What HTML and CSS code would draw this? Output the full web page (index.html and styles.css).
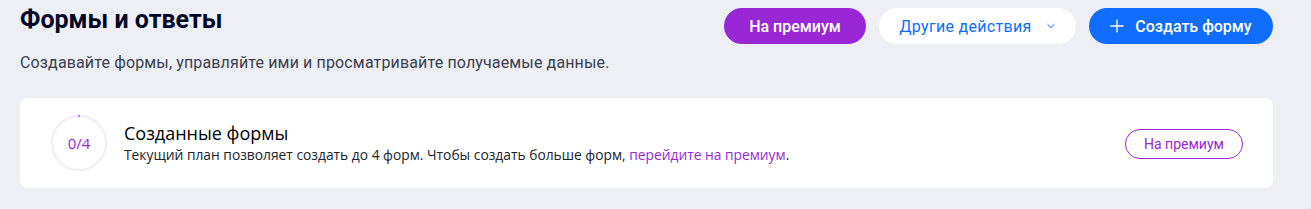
FILE: index.html
```html
<!DOCTYPE html>
<html lang="ru">
<head>
<meta charset="utf-8">
<link rel="stylesheet" href="styles.css">
</head>
<body>
<div class="page">
  <div class="header">
    <div class="heading">
      <h1 class="title">Формы и ответы</h1>
      <p class="subtitle">Создавайте формы, управляйте ими и просматривайте получаемые данные.</p>
    </div>
    <div class="actions">
      <button class="btn btn-premium">На премиум</button>
      <button class="btn btn-more">Другие действия
        <svg class="chev" width="10" height="6" viewBox="0 0 10 6"><path d="M1.5 1.2 L5 4.6 L8.5 1.2" fill="none" stroke="#116dff" stroke-width="1"/></svg>
      </button>
      <button class="btn btn-create">
        <svg class="plus" width="14" height="14" viewBox="0 0 14 14"><path d="M7 0.5 V13.5 M0.5 7 H13.5" stroke="#fff" stroke-width="1.3"/></svg>
        Создать форму
      </button>
    </div>
  </div>
  <div class="card">
    <div class="ring">
      <svg width="58" height="58" viewBox="0 0 58 58">
        <circle cx="29" cy="29" r="27" fill="none" stroke="#f3ebf9" stroke-width="2"/>
        <path d="M28.4 2 H29.6" stroke="#9a27d5" stroke-width="2"/>
      </svg>
      <span class="ring-text">0/4</span>
    </div>
    <div class="info">
      <div class="info-title">Созданные формы</div>
      <div class="info-text">Текущий план позволяет создать до 4 форм. Чтобы создать больше форм, <a class="link" href="#">перейдите на премиум</a>.</div>
    </div>
    <button class="btn-outline">На премиум</button>
  </div>
</div>
</body>
</html>
```
FILE: styles.css
```css
html, body {
  margin: 0;
  padding: 0;
  background: #edeff4;
}
body {
  font-family: "Roboto", sans-serif;
  color: #000624;
}
.page {
  padding: 0 38px 0 20px;
}
.header {
  display: flex;
  justify-content: space-between;
  align-items: flex-start;
}
.title {
  margin: 0;
  padding-top: 4px;
  font-family: "Roboto", sans-serif;
  font-size: 25px;
  font-weight: 700;
  line-height: 32px;
  color: #000624;
}
.subtitle {
  margin: 15px 0 0;
  font-size: 16px;
  line-height: 24px;
  letter-spacing: 0.14px;
  color: #3b3f4f;
  font-family: "Roboto", sans-serif;
}
.actions {
  display: flex;
  gap: 13px;
  padding-top: 8px;
}
.btn {
  height: 36px;
  border: none;
  border-radius: 18px;
  font-family: "Roboto", sans-serif;
  font-size: 16px;
  font-weight: 500;
  display: flex;
  align-items: center;
  cursor: pointer;
}
.btn-premium {
  background: #9a27d5;
  color: #fff;
  padding: 0 24px;
  width: 142px;
  justify-content: center;
}
.btn-more {
  background: #fff;
  color: #116dff;
  font-weight: 400;
  width: 197px;
  justify-content: center;
  gap: 14px;
  letter-spacing: 0.3px;
}
.btn-create {
  background: #116dff;
  color: #fff;
  width: 184px;
  justify-content: center;
  gap: 11px;
}
.card {
  margin-top: 23px;
  background: #fff;
  border-radius: 8px;
  height: 90px;
  display: flex;
  align-items: center;
  padding: 0 30px 0 30px;
  box-sizing: border-box;
}
.ring {
  position: relative;
  width: 58px;
  height: 58px;
  flex: none;
}
.ring svg {
  display: block;
}
.ring-text {
  position: absolute;
  inset: 0;
  display: flex;
  align-items: center;
  justify-content: center;
  font-family: "Open Sans", sans-serif;
  font-size: 15px;
  color: #9a27d5;
}
.info {
  margin-left: 16px;
  flex: 1;
  padding-bottom: 2px;
}
.info-title {
  font-family: "Open Sans", sans-serif;
  font-size: 18px;
  line-height: 24px;
  color: #000;
}
.info-text {
  margin-top: 1px;
  font-family: "Open Sans", sans-serif;
  font-size: 13.8px;
  line-height: 18px;
  color: #20232c;
}
.link {
  color: #9a27d5;
  text-decoration: none;
}
.btn-outline {
  height: 30px;
  width: 118px;
  border: 1px solid #9a27d5;
  border-radius: 15px;
  background: #fff;
  color: #9a27d5;
  font-family: "Roboto", sans-serif;
  font-size: 14px;
  margin-top: 1px;
}
```
